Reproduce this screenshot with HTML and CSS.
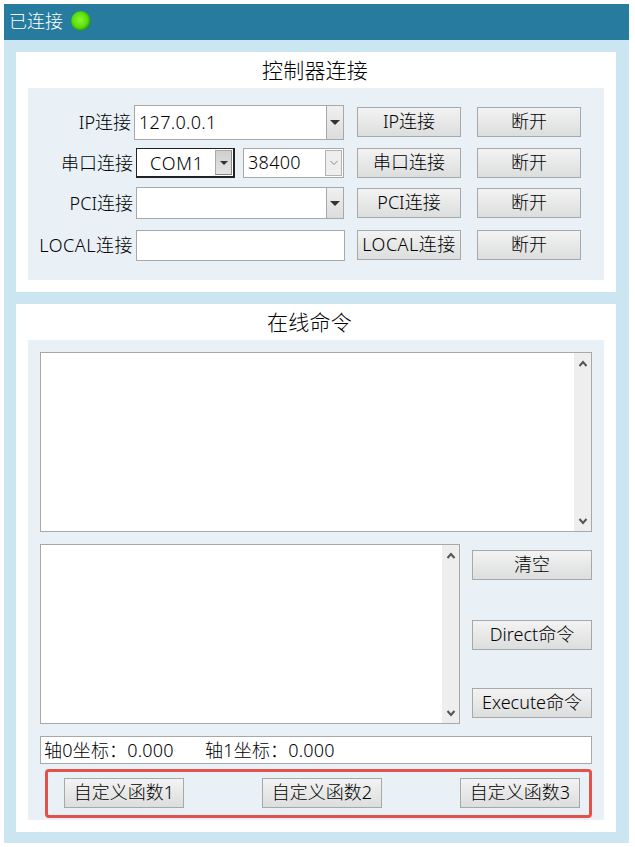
FILE: index.html
```html
<!DOCTYPE html>
<html lang="zh-CN">
<head>
<meta charset="utf-8">
<title>在线命令</title>
<link rel="stylesheet" href="styles.css">
</head>
<body>
<div class="window">
  <header class="titlebar">
    <span>已连接</span>
    <span class="led"></span>
  </header>
  <main class="content">
    <section class="card">
      <h2 class="card-title">控制器连接</h2>
      <div class="card-body conn">
        <div class="row">
          <label class="lbl lbl-ip">IP连接</label>
          <div class="field combo combo-ip"><span class="val">127.0.0.1</span><span class="drop"><i class="tri"></i></span></div>
          <button class="btn btn-conn">IP连接</button>
          <button class="btn btn-conn">断开</button>
        </div>
        <div class="row row-com">
          <label class="lbl">串口连接</label>
          <div class="com"><span class="com-val">COM1</span><span class="com-drop"><i class="tri tri-sm"></i></span></div>
          <div class="field baud"><span class="val">38400</span><span class="baud-drop"><svg width="10" height="6" viewBox="0 0 10 6"><path d="M1.5 1 L5 4.5 L8.5 1" fill="none" stroke="#8a8a8a" stroke-width="1"/></svg></span></div>
          <button class="btn btn-conn">串口连接</button>
          <button class="btn btn-conn">断开</button>
        </div>
        <div class="row row-pci">
          <label class="lbl">PCI连接</label>
          <div class="field combo combo-pci"><span class="val"></span><span class="drop"><i class="tri"></i></span></div>
          <button class="btn btn-conn">PCI连接</button>
          <button class="btn btn-conn">断开</button>
        </div>
        <div class="row row-local">
          <label class="lbl lbl-local">LOCAL连接</label>
          <div class="field local"></div>
          <button class="btn btn-conn btn-local">LOCAL连接</button>
          <button class="btn btn-conn">断开</button>
        </div>
      </div>
    </section>
    <section class="card">
      <h2 class="card-title title-cmd">在线命令</h2>
      <div class="card-body cmd">
        <div class="text-box box-top">
          <div class="scroll">
            <svg width="10" height="7" viewBox="0 0 10 7"><path d="M1.5 6 L5 2 L8.5 6" fill="none" stroke="#555" stroke-width="2"/></svg>
            <svg width="10" height="7" viewBox="0 0 10 7"><path d="M1.5 1 L5 5 L8.5 1" fill="none" stroke="#555" stroke-width="2"/></svg>
          </div>
        </div>
        <div class="mid">
          <div class="text-box box-mid">
            <div class="scroll">
              <svg width="10" height="7" viewBox="0 0 10 7"><path d="M1.5 6 L5 2 L8.5 6" fill="none" stroke="#555" stroke-width="2"/></svg>
              <svg width="10" height="7" viewBox="0 0 10 7"><path d="M1.5 1 L5 5 L8.5 1" fill="none" stroke="#555" stroke-width="2"/></svg>
            </div>
          </div>
          <div class="side">
            <button class="btn btn-wide">清空</button>
            <button class="btn btn-wide btn-direct">Direct命令</button>
            <button class="btn btn-wide btn-exec">Execute命令</button>
          </div>
        </div>
        <div class="status"><span class="axis0">轴0坐标：0.000</span><span>轴1坐标：0.000</span></div>
        <div class="custom">
          <button class="btn btn-wide">自定义函数1</button>
          <button class="btn btn-wide">自定义函数2</button>
          <button class="btn btn-wide">自定义函数3</button>
        </div>
      </div>
    </section>
  </main>
</div>
</body>
</html>
```
FILE: styles.css
```css
* { box-sizing: border-box; }
html, body { margin: 0; padding: 0; background: #fff; }
body {
  padding: 4px 6px 4px 4px;
  height: 847px;
  overflow: hidden;
  font-family: "Noto Sans", "Noto Sans CJK SC", sans-serif;
  font-size: 18px;
  font-weight: 300;
  color: #000;
}
.window { width: 625px; height: 839px; background: #cbe6f1; }
.titlebar {
  height: 36px;
  background: #277b9f;
  color: #fff;
  display: flex;
  align-items: center;
  gap: 8px;
  padding: 0 0 2px 5px;
  line-height: 1;
}
.led {
  width: 20px;
  height: 20px;
  border-radius: 50%;
  background: radial-gradient(circle at 45% 45%, #8cf62e 0, #55e00a 48%, #3fb40c 60%, #1d7a55 74%, #8cc4ce 100%);
}
.content { padding: 12px 13px 12px 12px; display: flex; flex-direction: column; gap: 12px; }
.card { background: #fff; padding: 0 12px 12px; }
.card-title {
  margin: 0;
  height: 36px;
  font-size: 21px;
  font-weight: 300;
  line-height: 37px;
  text-align: center;
  letter-spacing: .2px;
}
.card-title:not(.title-cmd) { padding-right: 2px; }
.title-cmd { padding-right: 13px; }
.card-body { background: #e9f1f6; }
.conn { padding: 14px 0 12px; }
.row { display: flex; align-items: center; height: 42px; }
.row-pci { height: 38px; }
.row-local { height: 46px; }
.row:first-child { height: 40px; }
.lbl { width: 105px; margin-right: 3px; text-align: right; white-space: nowrap; line-height: 1; flex: none; }
.lbl-ip { width: 103px; }
.lbl-local, .btn-local { letter-spacing: .5px; }
.field { background: #fff; border: 1px solid #a6a8a9; display: flex; line-height: 1; flex: none; }
.val { flex: 1; display: flex; align-items: center; padding: 0 0 2px 4px; letter-spacing: .3px; }
.combo-ip { width: 210px; height: 35px; margin-top: 1px; }
.combo-pci { width: 208px; height: 32px; }
.local { width: 209px; height: 31px; margin-top: 1px; }
.drop {
  width: 17px;
  border-left: 1px solid #a6a8a9;
  background: linear-gradient(#f0f0f0, #dcdcdc);
  display: flex;
  align-items: center;
  justify-content: center;
}
.tri { display: block; width: 0; height: 0; border: 5px solid transparent; border-top: 5px solid #333; border-bottom: 0; }
.tri-sm { border-width: 4px; border-bottom: 0; }
.com {
  width: 99px;
  height: 30px;
  background: #fff;
  border: 1px solid #222;
  border-right-width: 2px;
  border-bottom-width: 2px;
  display: flex;
  line-height: 1;
  flex: none;
}
.com-val { flex: 1; display: flex; align-items: center; padding-left: 13px; letter-spacing: .8px; }
.com-drop {
  width: 17px;
  margin: 1px 1px 1px 0;
  background: linear-gradient(#d0d0d0, #e4e4e4);
  border: 1px solid #aaa;
  border-right-color: #888;
  border-bottom-color: #888;
  display: flex;
  align-items: center;
  justify-content: center;
}
.baud { width: 101px; height: 30px; margin-left: 8px; }
.baud-drop {
  width: 17px;
  margin: 1px;
  background: #eee;
  border: 1px solid #b4b4b4;
  display: flex;
  align-items: center;
  justify-content: center;
}
.btn {
  font: inherit;
  color: inherit;
  line-height: 1;
  padding: 0 0 2px;
  height: 30px;
  border: 1px solid #a6a8a9;
  background: linear-gradient(#f3f3f3, #dcdddd);
  white-space: nowrap;
  border-radius: 0;
  flex: none;
}
.btn-conn { width: 104px; margin-left: 16px; }
.row .btn-conn:nth-of-type(1) { margin-left: 13px; }
.row-local .btn-conn:nth-of-type(1) { margin-left: 12px; }
.btn-wide { width: 120px; }
.cmd { padding: 12px; height: 480px; }
.text-box { background: #fff; border: 1px solid #a6a8a9; display: flex; justify-content: flex-end; }
.box-top { height: 180px; }
.mid { display: flex; justify-content: space-between; margin-top: 12px; }
.box-mid { width: 420px; height: 180px; }
.scroll {
  width: 17px;
  background: #eeeeee;
  display: flex;
  flex-direction: column;
  justify-content: space-between;
  align-items: center;
  padding: 7px 0 6px;
}
.scroll svg { display: block; }
.side { display: flex; flex-direction: column; padding-top: 6px; letter-spacing: .2px; }
.btn-direct { margin-top: 40px; }
.btn-exec { margin-top: 38px; }
.status {
  margin-top: 12px;
  height: 28px;
  background: #fff;
  border: 1px solid #a6a8a9;
  padding-left: 3px;
  display: flex;
  align-items: center;
  line-height: 1;
  letter-spacing: .2px;
}
.axis0 { width: 161px; }
.custom {
  margin: 5px 0 0 5px;
  height: 49px;
  border: 3px solid #e0524a;
  border-radius: 4px;
  padding: 6px 9px 0 16px;
  display: flex;
  justify-content: space-between;
  align-items: flex-start;
  letter-spacing: .6px;
}
```
